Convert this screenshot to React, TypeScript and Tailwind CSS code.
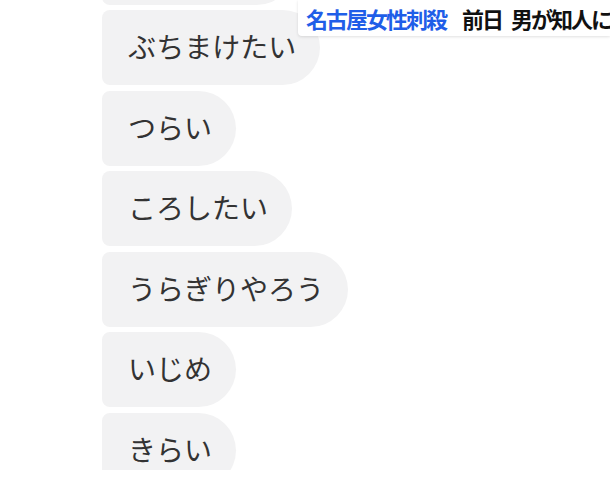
const font = { fontFamily: '"Noto Sans CJK JP", "Noto Sans", sans-serif' };

const messages = ["ぶちまけたい", "つらい", "ころしたい", "うらぎりやろう", "いじめ", "きらい"];

function Bubble({ text, width }: { text: string; width?: string }) {
  return (
    <div
      className={`h-[75px] shrink-0 self-start flex items-center pl-[26px] pr-[24px] pb-[3px] bg-[#f2f2f3] rounded-l-[8px] rounded-r-[38px] text-[28px] leading-none text-[#333333] ${width ?? ""}`}
    >
      {text}
    </div>
  );
}

export default function App() {
  return (
    <div className="relative w-[610px] h-[478px] bg-white overflow-hidden" style={font}>
      <div className="h-[470px] overflow-hidden pl-[102px]">
        <div className="flex flex-col gap-[5.5px] mt-[-70.5px]">
          {/* previous message, mostly scrolled off */}
          <Bubble text="" width="w-[192px]" />
          {messages.map((m) => (
            <Bubble key={m} text={m} />
          ))}
        </div>
      </div>

      <div className="absolute top-0 left-[298px] right-0 h-[36px] bg-white rounded-bl-[4px] shadow-[0_1px_3px_rgba(0,0,0,0.12)] flex items-center pl-[8px] whitespace-nowrap font-bold text-[22px] tracking-[-2px] leading-none">
        <span className="text-[#1f5ee8]">名古屋女性刺殺</span>
        <span className="ml-[16px] text-[#111111]">前日</span>
        <span className="ml-[9px] text-[#111111]">男が知人に</span>
        <span className="ml-[3px] w-[10px] h-[22px] bg-[#e8333a]" />
      </div>
    </div>
  );
}
